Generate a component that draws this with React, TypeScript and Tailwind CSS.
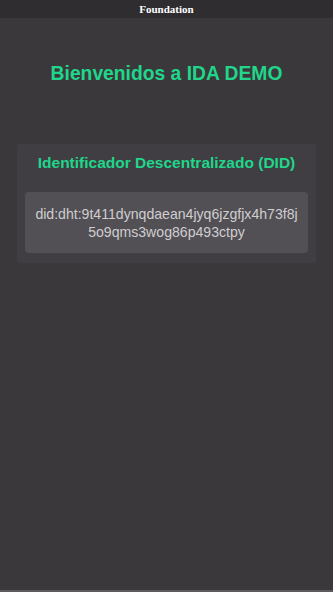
import React from "react";

export default function App() {
  return (
    <div className="w-[333px] h-[592px] flex flex-col bg-[#3a383b] overflow-hidden" style={{ fontFamily: '"Liberation Sans", Arial, sans-serif' }}>
      <div className="h-[18px] shrink-0 bg-[#2f2d30] flex items-center justify-center">
        <span className="text-white text-[11px] font-bold leading-none" style={{ fontFamily: '"Liberation Serif", serif' }}>Foundation</span>
      </div>
      <div className="flex-1 flex flex-col items-center">
        <h1 className="mt-[44px] text-[19.3px] font-bold leading-[24px] text-[#1fd68b] whitespace-nowrap">Bienvenidos a IDA DEMO</h1>
        <div className="mt-[58px] w-[299px] bg-[#403e42] rounded-[3px] px-[8px] pt-[9px] pb-[10px] flex flex-col items-center">
          <h2 className="text-[15.5px] font-bold leading-[20px] text-[#1fd68b] whitespace-nowrap">Identificador Descentralizado (DID)</h2>
          <div className="mt-[19px] w-full bg-[#525054] rounded-[4px] pt-[13px] pb-[12px] flex justify-center">
            <p className="text-center text-[14.1px] leading-[18px] text-[#cfcdd0] whitespace-nowrap">
              did:dht:9t411dynqdaean4jyq6jzgfjx4h73f8j
              <br />
              5o9qms3wog86p493ctpy
            </p>
          </div>
        </div>
      </div>
      <div className="h-[2px] shrink-0 bg-[#5c5a5d]" />
    </div>
  );
}
